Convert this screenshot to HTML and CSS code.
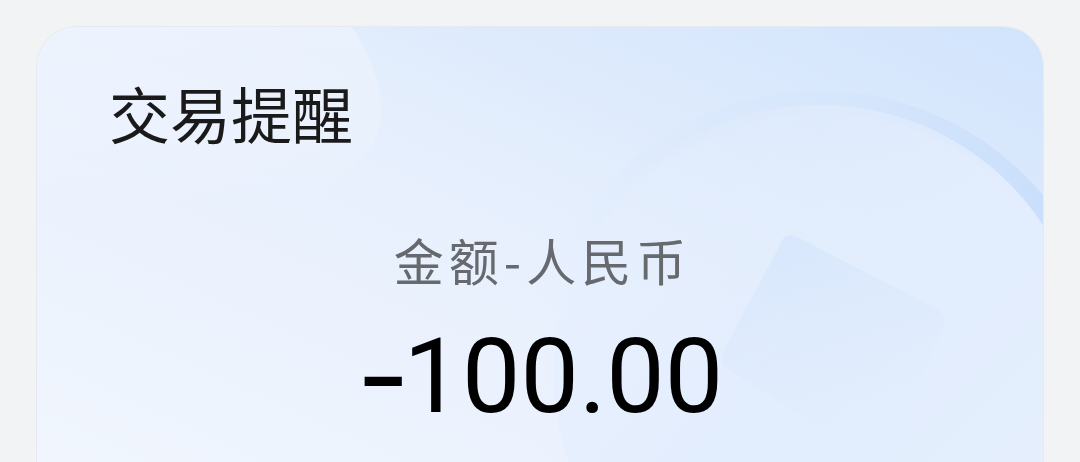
FILE: index.html
```html
<!DOCTYPE html>
<html lang="zh-CN">
<head>
<meta charset="utf-8">
<link rel="stylesheet" href="styles.css">
</head>
<body>
<div class="card">
  <svg class="deco" width="1006" height="460" viewBox="0 0 1006 460" xmlns="http://www.w3.org/2000/svg">
    <defs>
      <linearGradient id="bg" x1="0" y1="1" x2="1" y2="0">
        <stop offset="0" stop-color="#f1f6fe"/>
        <stop offset="0.5" stop-color="#e8f0fd"/>
        <stop offset="1" stop-color="#d1e4fc"/>
      </linearGradient>
      <linearGradient id="ring" x1="0" y1="0" x2="1" y2="0">
        <stop offset="0" stop-color="#cbe0fb" stop-opacity="0"/>
        <stop offset="0.55" stop-color="#cbe0fb" stop-opacity="0.25"/>
        <stop offset="1" stop-color="#c6dcfb" stop-opacity="1"/>
      </linearGradient>
      <linearGradient id="disc" x1="0" y1="0" x2="1" y2="1">
        <stop offset="0" stop-color="#e4eefd" stop-opacity="0"/>
        <stop offset="0.5" stop-color="#e2edfd" stop-opacity="1"/>
        <stop offset="1" stop-color="#e6f0fe" stop-opacity="1"/>
      </linearGradient>
      <linearGradient id="sq" x1="0.3" y1="0" x2="0.6" y2="1">
        <stop offset="0" stop-color="#d6e6fc" stop-opacity="0.85"/>
        <stop offset="1" stop-color="#e2eefd" stop-opacity="0.15"/>
      </linearGradient>
      <linearGradient id="blob" x1="0" y1="0" x2="0" y2="1">
        <stop offset="0" stop-color="#f3f7fe" stop-opacity="0.5"/>
        <stop offset="0.6" stop-color="#f3f7fe" stop-opacity="0.3"/>
        <stop offset="1" stop-color="#f3f7fe" stop-opacity="0"/>
      </linearGradient>
    </defs>
    <rect width="1006" height="460" fill="url(#bg)"/>
    <path d="M-20 -10 L308 -10 C330 20 345 55 344 85 C342 130 300 165 230 175 C140 185 40 175 -20 160 Z" fill="url(#blob)"/>
    <circle cx="783" cy="355" r="280" fill="none" stroke="url(#ring)" stroke-width="22"/>
    <circle cx="783" cy="345" r="267" fill="url(#disc)"/>
    <path d="M760 210 Q748 204 744 216 L686 325 Q680 338 694 344 L836 434 Q850 443 856 429 L906 300 Q911 287 898 281 Z" fill="url(#sq)"/>
  </svg>
  <h1 class="title">交易提醒</h1>
  <div class="amount-block">
    <div class="label">金额-人民币</div>
    <div class="amount"><span class="sign">-</span>100.00</div>
  </div>
</div>
</body>
</html>
```
FILE: styles.css
```css
html, body {
  margin: 0;
  padding: 0;
}
body {
  background: #f2f3f5;
  width: 1080px;
  height: 462px;
  overflow: hidden;
  font-family: "Noto Sans CJK SC", "Noto Sans", sans-serif;
}
.card {
  position: relative;
  margin: 27px 0 0 37px;
  width: 1006px;
  height: 480px;
  border-radius: 40px;
  overflow: hidden;
  box-shadow: 0 0 0 1px #e6e9ee;
  display: flex;
  flex-direction: column;
}
.deco {
  position: absolute;
  left: 0;
  top: 0;
}
.title {
  position: relative;
  margin: 0;
  padding: 50px 0 0 72px;
  font-size: 61px;
  line-height: 72px;
  font-weight: 400;
  color: #1a1a1a;
}
.amount-block {
  position: relative;
  display: flex;
  flex-direction: column;
  align-items: center;
  padding-top: 80px;
}
.label {
  font-size: 50px;
  line-height: 60px;
  letter-spacing: 5px;
  padding-left: 5px;
  color: #66696e;
}
.amount {
  margin-top: 33px;
  padding-left: 8px;
  font-family: Roboto, "Noto Sans", sans-serif;
  font-size: 104px;
  line-height: 110px;
  color: #000;
}
.sign {
  display: inline-block;
  margin: 0 6px 0 4px;
  transform: scale(1.5, 1.2);
}
```
